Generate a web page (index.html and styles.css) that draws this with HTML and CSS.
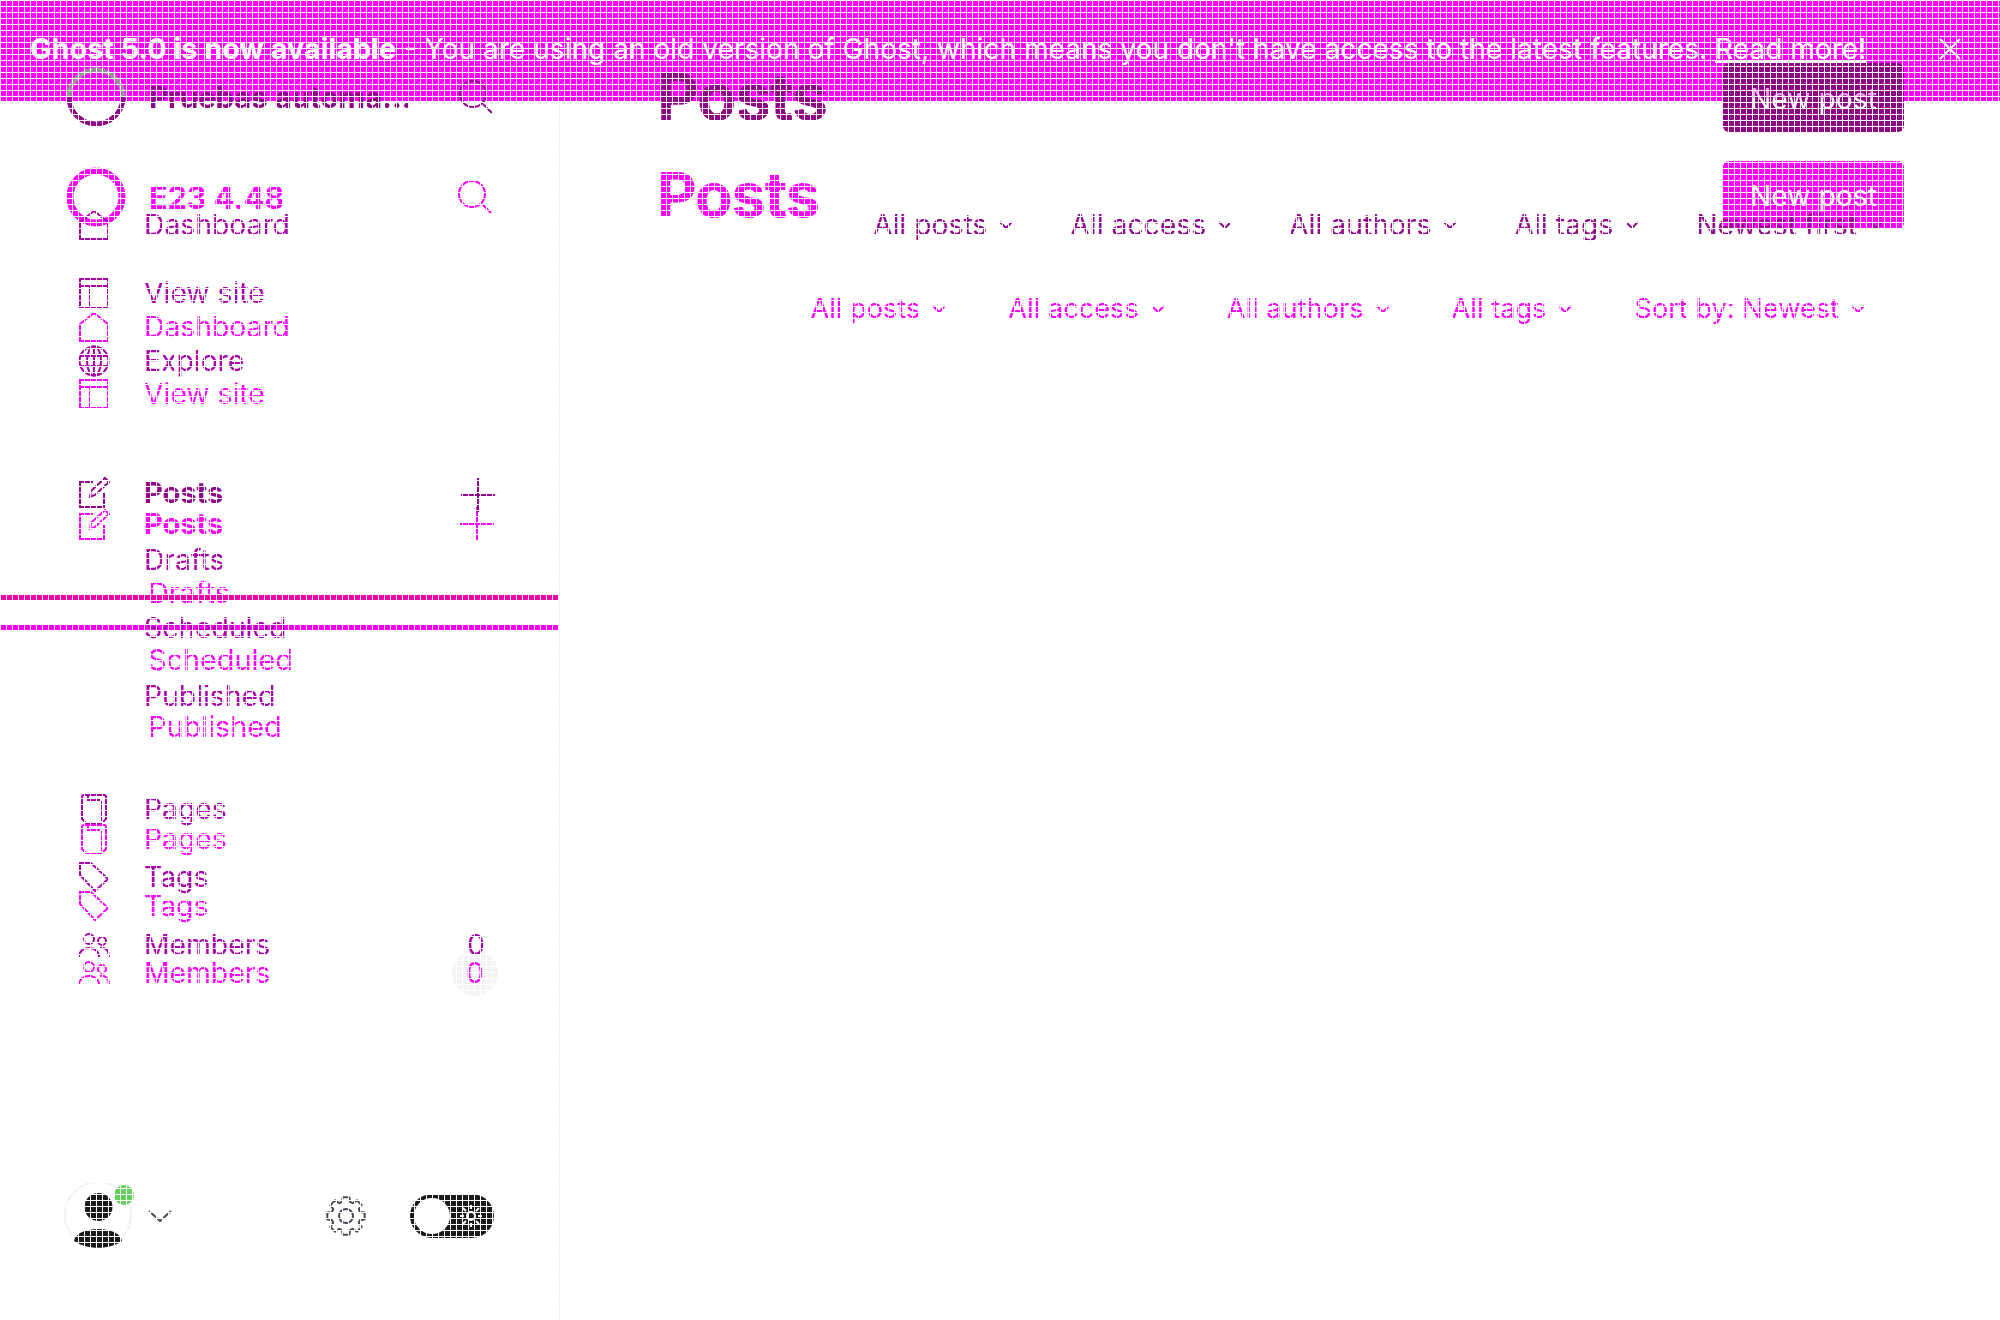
FILE: index.html
```html
<!DOCTYPE html>
<html lang="en">
<head>
    <meta charset="UTF-8">
    <title>Posts</title>
    <link rel="stylesheet" href="styles.css">
</head>
<body>
    <svg class="defs" width="0" height="0">
        <symbol id="i-house" viewBox="0 0 32 32"><path d="M2 13 16 2l14 11v17H2z"/></symbol>
        <symbol id="i-layout" viewBox="0 0 32 32"><path d="M2 2h28v28H2zM2 9h28M12 9v21"/></symbol>
        <symbol id="i-globe" viewBox="0 0 32 32"><circle cx="16" cy="16" r="14.5"/><ellipse cx="16" cy="16" rx="7" ry="14.5"/><path d="M16 1.5v29M2.5 11h27M2.5 21h27"/></symbol>
        <symbol id="i-note" viewBox="0 0 32 32"><path d="M15 6H2v25h24V17"/><path d="m12 21 1-6L27 2l4 4-14 13z"/></symbol>
        <symbol id="i-pages" viewBox="0 0 32 32"><path d="M6 2h20a2 2 0 0 1 2 2v22l-4 4H8l-4-4V4a2 2 0 0 1 2-2zM10 2v5h12M24 8v20"/></symbol>
        <symbol id="i-tag" viewBox="0 0 32 32"><path d="M2 2h11l17 16-13 12L2 14z"/></symbol>
        <symbol id="i-members" viewBox="0 0 32 24"><circle cx="11" cy="6" r="5"/><circle cx="24" cy="8" r="4"/><path d="M1 24c0-12 20-12 20 0M22 15c6-1 9 3 9 9"/></symbol>
        <symbol id="i-search" viewBox="0 0 36 36"><circle cx="15" cy="15" r="13"/><path d="m25 25 9 9"/></symbol>
        <symbol id="i-plus" viewBox="0 0 36 36"><path d="M18 1v34M1 18h34"/></symbol>
        <symbol id="i-down" viewBox="0 0 14 10"><path d="m1 2 6 6 6-6"/></symbol>
    </svg>

    <div class="banner">
        <span><strong>Ghost 5.0 is now available</strong> - You are using an old version of Ghost, which means you don't have access to the latest features. <a class="banner-link">Read more!</a></span>
        <svg class="banner-close" viewBox="0 0 24 24"><path d="M2 2l20 20M22 2 2 22"/></svg>
    </div>

    <!-- second copy of the page, the brighter one -->
    <div class="layer layer-b">
        <aside class="sidebar">
            <div class="brand">
                <svg class="logo" viewBox="0 0 60 60"><circle cx="30" cy="30" r="26"/></svg>
                <span class="brand-name">E23 4.48</span>
                <svg class="nav-action"><use href="#i-search"/></svg>
            </div>
            <nav class="group group-top">
                <a class="nav-row"><svg class="nav-icon"><use href="#i-house"/></svg>Dashboard</a>
                <a class="nav-row"><svg class="nav-icon"><use href="#i-layout"/></svg>View site</a>
            </nav>
            <nav class="group group-posts">
                <a class="nav-row nav-strong"><svg class="nav-icon"><use href="#i-note"/></svg>Posts<svg class="nav-action nav-plus"><use href="#i-plus"/></svg></a>
                <a class="nav-row nav-sub">Drafts</a>
                <a class="nav-row nav-sub">Scheduled</a>
                <a class="nav-row nav-sub">Published</a>
            </nav>
            <nav class="group group-pages">
                <a class="nav-row"><svg class="nav-icon"><use href="#i-pages"/></svg>Pages</a>
                <a class="nav-row"><svg class="nav-icon"><use href="#i-tag"/></svg>Tags</a>
                <a class="nav-row"><svg class="nav-icon"><use href="#i-members"/></svg>Members<span class="count count-pill">0</span></a>
            </nav>
        </aside>
        <main class="content">
            <div class="title-row">
                <h1>Posts</h1>
                <a class="new-post"><span class="new-post-label">New post</span></a>
            </div>
            <div class="filters">
                <span class="filter">All posts<svg class="chevron"><use href="#i-down"/></svg></span>
                <span class="filter">All access<svg class="chevron"><use href="#i-down"/></svg></span>
                <span class="filter">All authors<svg class="chevron"><use href="#i-down"/></svg></span>
                <span class="filter">All tags<svg class="chevron"><use href="#i-down"/></svg></span>
                <span class="filter">Sort by: Newest<svg class="chevron"><use href="#i-down"/></svg></span>
            </div>
        </main>
    </div>

    <!-- first copy, darker, sits on top of the banner -->
    <div class="layer layer-a">
        <aside class="sidebar">
            <div class="brand">
                <svg class="logo" viewBox="0 0 60 60"><path class="logo-top" d="M3 30a27 27 0 0 1 54 0"/><path d="M3 30a27 27 0 0 0 54 0"/></svg>
                <span class="brand-name">Pruebas automa...</span>
                <svg class="nav-action"><use href="#i-search"/></svg>
            </div>
            <nav class="group group-top">
                <a class="nav-row"><svg class="nav-icon"><use href="#i-house"/></svg>Dashboard</a>
                <a class="nav-row"><svg class="nav-icon"><use href="#i-layout"/></svg>View site</a>
                <a class="nav-row"><svg class="nav-icon"><use href="#i-globe"/></svg>Explore</a>
            </nav>
            <nav class="group group-posts">
                <a class="nav-row nav-strong"><svg class="nav-icon"><use href="#i-note"/></svg>Posts<svg class="nav-action nav-plus"><use href="#i-plus"/></svg></a>
                <a class="nav-row">Drafts</a>
                <a class="nav-row">Scheduled</a>
                <a class="nav-row">Published</a>
            </nav>
            <nav class="group group-pages">
                <a class="nav-row"><svg class="nav-icon"><use href="#i-pages"/></svg>Pages</a>
                <a class="nav-row"><svg class="nav-icon"><use href="#i-tag"/></svg>Tags</a>
                <a class="nav-row"><svg class="nav-icon"><use href="#i-members"/></svg>Members<span class="count">0</span></a>
            </nav>
            <div class="sidebar-foot">
                <div class="avatar">
                    <svg viewBox="0 0 68 68"><circle class="avatar-ring" cx="34" cy="33" r="33"/><circle class="avatar-fill" cx="34.5" cy="25" r="14"/><path class="avatar-fill" d="M10 59c2-16 46-16 48 0-12 9-36 9-48 0z"/></svg>
                    <span class="status-dot"></span>
                </div>
                <svg class="foot-chevron" viewBox="0 0 24 12"><path d="m1 1 11 10L23 1"/></svg>
                <svg class="gear" viewBox="0 0 40 40"><polygon points="16.7,1.3 23.3,1.3 24.2,6.1 26.8,7.2 30.9,4.4 35.6,9.1 32.8,13.2 33.9,15.8 38.7,16.7 38.7,23.3 33.9,24.2 32.8,26.8 35.6,30.9 30.9,35.6 26.8,32.8 24.2,33.9 23.3,38.7 16.7,38.7 15.8,33.9 13.2,32.8 9.1,35.6 4.4,30.9 7.2,26.8 6.1,24.2 1.3,23.3 1.3,16.7 6.1,15.8 7.2,13.2 4.4,9.1 9.1,4.4 13.2,7.2 15.8,6.1"/><circle cx="20" cy="20" r="7"/></svg>
                <div class="night-toggle">
                    <span class="night-knob"></span>
                    <svg class="night-sun" viewBox="0 0 24 24"><circle cx="12" cy="12" r="4"/><path d="M12 1v4M12 19v4M1 12h4M19 12h4M4 4l3 3M17 17l3 3M20 4l-3 3M7 17l-3 3"/></svg>
                </div>
            </div>
        </aside>
        <main class="content">
            <div class="title-row">
                <h1>Posts</h1>
                <a class="new-post"><span class="new-post-label">New post</span></a>
            </div>
            <div class="filters">
                <span class="filter">All posts<svg class="chevron"><use href="#i-down"/></svg></span>
                <span class="filter">All access<svg class="chevron"><use href="#i-down"/></svg></span>
                <span class="filter">All authors<svg class="chevron"><use href="#i-down"/></svg></span>
                <span class="filter">All tags<svg class="chevron"><use href="#i-down"/></svg></span>
                <span class="filter">Newest first<svg class="chevron"><use href="#i-down"/></svg></span>
            </div>
        </main>
    </div>

    <div class="rule rule-pink"></div>
    <div class="rule rule-magenta"></div>
    <div class="mesh"></div>
</body>
</html>
```

FILE: styles.css
```css
* {
    box-sizing: border-box;
}

html, body {
    height: 100%;
}

body {
    margin: 0;
    position: relative;
    height: 1320px;
    overflow: hidden;
    background: #fff;
    font-family: Inter, "Liberation Sans", sans-serif;
    font-size: 28.3px;
}

.defs {
    position: absolute;
}

svg {
    fill: none;
    stroke: currentColor;
    stroke-width: 2;
    flex: none;
}

/* banner */
.banner {
    position: relative;
    z-index: 1;
    height: 101px;
    padding: 0 38px 4px 30px;
    display: flex;
    align-items: center;
    justify-content: space-between;
    background: #f0f;
    color: #fff;
    font-size: 28.1px;
}

.banner strong {
    font-size: 28.8px;
    font-weight: 700;
}

.banner-link {
    text-decoration: underline;
}

.banner-close {
    width: 24px;
    height: 24px;
}

/* the two overlaid copies */
.layer {
    position: absolute;
    top: 0;
    left: 0;
    width: 2000px;
    height: 1320px;
    display: flex;
}

.layer-a {
    z-index: 2;
    color: #a900a9;
}

.layer-b {
    color: #f0f;
}

.sidebar {
    width: 560px;
    height: 1320px;
    padding: 0 66px 0 66px;
    display: flex;
    flex-direction: column;
}

.layer-b .sidebar {
    border-right: 1px solid #eee;
}

.brand {
    height: 60px;
    display: flex;
    align-items: center;
    font-weight: 700;
}

.layer-a .brand {
    margin-top: 67px;
    font-size: 29.3px;
}

.layer-b .brand {
    margin-top: 167px;
    font-size: 30.6px;
}

.logo {
    width: 60px;
    height: 60px;
    margin-right: 23px;
}

.layer-a .logo {
    stroke-width: 5;
    color: #90078a;
}

.layer-a .logo-top {
    stroke: #9c8f9c;
}

.layer-b .logo {
    stroke-width: 7;
}

.layer-a .brand-name {
    color: #8d0684;
}

.nav-row {
    height: 68px;
    padding-left: 12px;
    display: flex;
    align-items: center;
}

.nav-row:not(:has(.nav-icon)) {
    padding-left: 78px;
}

.layer-b .nav-row {
    height: 67px;
}

.layer-b .nav-sub {
    padding-left: 82px;
    font-size: 28.8px;
}

.layer-b .nav-strong {
    margin-bottom: 2px;
}

.nav-icon {
    width: 32px;
    height: 32px;
    margin-right: 34px;
}

.nav-strong {
    font-size: 29px;
    font-weight: 700;
}

.layer-a .nav-strong {
    color: #90078a;
}

.nav-action {
    width: 36px;
    height: 36px;
    margin-left: auto;
}

.layer-a .nav-action {
    color: #90078a;
}

.nav-plus {
    margin-right: -2px;
}

.layer-a .nav-plus {
    margin-top: 5px;
}

.count {
    width: 46px;
    height: 46px;
    margin-left: auto;
    margin-right: -5px;
    display: flex;
    align-items: center;
    justify-content: center;
    border-radius: 50%;
}

.count-pill {
    background: #f2f3f5;
}

.layer-a .group-top {
    margin-top: 64px;
}

.layer-a .group-posts {
    margin-top: 63px;
}

.layer-a .group-pages {
    margin-top: 45px;
}

.layer-b .group-top {
    margin-top: 66px;
}

.layer-b .group-posts {
    margin-top: 63px;
}

.layer-b .group-pages {
    margin-top: 45px;
}

.sidebar-foot {
    margin-top: auto;
    margin-bottom: 70px;
    display: flex;
    align-items: center;
    margin-left: -2px;
}

.avatar {
    position: relative;
    width: 68px;
    height: 68px;
}

.avatar svg {
    display: block;
}

.avatar-ring {
    stroke: #eee;
    stroke-width: 2;
}

.avatar-fill {
    fill: #1a1a1a;
    stroke: none;
}

.status-dot {
    position: absolute;
    top: 3px;
    right: -2px;
    width: 20px;
    height: 20px;
    border-radius: 50%;
    background: #63cf5c;
}

.foot-chevron {
    width: 24px;
    height: 12px;
    margin-left: 16px;
    color: #444b55;
}

.gear {
    width: 40px;
    height: 40px;
    margin-left: 154px;
    color: #444b55;
}

.night-toggle {
    width: 84px;
    height: 44px;
    margin-left: 44px;
    padding: 0 11px 0 4px;
    display: flex;
    align-items: center;
    justify-content: space-between;
    border-radius: 22px;
    background: #1a1a1a;
}

.night-knob {
    width: 36px;
    height: 36px;
    border-radius: 50%;
    background: #fff;
}

.night-sun {
    width: 24px;
    height: 24px;
    color: #fff;
}

/* main column */
.content {
    flex: 1;
    padding-right: 96px;
    padding-left: 97px;
}

.title-row {
    display: flex;
    justify-content: space-between;
    align-items: center;
}

.layer-a .title-row {
    margin-top: 63px;
}

.layer-b .title-row {
    margin-top: 161px;
}

h1 {
    margin: 0;
    font-weight: 700;
    line-height: 1;
    letter-spacing: -0.02em;
}

.layer-a h1 {
    font-size: 64.5px;
    color: #8d0684;
}

.layer-b h1 {
    font-size: 61.5px;
}

.new-post {
    width: 181px;
    padding-top: 2px;
    display: flex;
    align-items: center;
    justify-content: center;
    border-radius: 6px;
    color: #fff;
}

.layer-a .new-post {
    height: 69px;
    background: #8d0684;
}

/* the label of the upper button still crosses the banner */
.layer-a .new-post-label {
    background: linear-gradient(#fa9cfa 0 16px, #fff 16px);
    -webkit-background-clip: text;
    background-clip: text;
    color: transparent;
}

.layer-b .new-post {
    height: 68px;
    background: #f0f;
}

.filters {
    display: flex;
    justify-content: flex-end;
}

.layer-a .filters {
    margin-top: 77px;
    padding-right: 21px;
    gap: 57px;
    color: #90078a;
}

.layer-b .filters {
    margin-top: 64px;
    padding-right: 39px;
    gap: 62px;
    font-size: 27.2px;
}

.filter {
    display: flex;
    align-items: center;
    gap: 12px;
    line-height: 32px;
}

.chevron {
    width: 14px;
    height: 10px;
}

/* stray rules across the sidebar */
.rule {
    position: absolute;
    left: 1px;
    width: 557px;
    height: 5px;
}

.rule-pink {
    top: 595px;
    background: #ee00aa;
}

.rule-magenta {
    top: 625px;
    background: #f0f;
}

/* white 6px mesh over everything */
.mesh {
    position: absolute;
    z-index: 3;
    inset: 0;
    background-image:
        linear-gradient(to right, #fff 1px, transparent 1px),
        linear-gradient(to bottom, #fff 1px, transparent 1px);
    background-size: 6px 6px;
    pointer-events: none;
}
```
